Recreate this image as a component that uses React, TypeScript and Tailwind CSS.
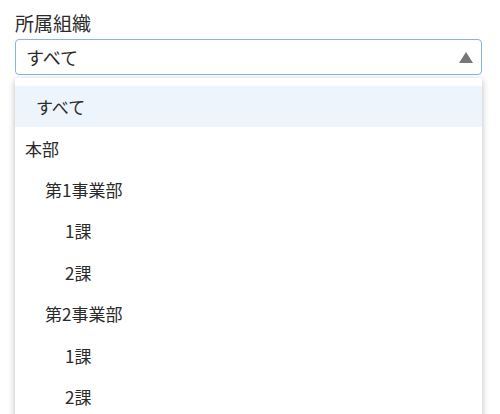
import React from "react";

const items: { label: string; pad: string; active?: boolean }[] = [
  { label: "すべて", pad: "pl-[21px]", active: true },
  { label: "本部", pad: "pl-[10px]" },
  { label: "第1事業部", pad: "pl-[30px]" },
  { label: "1課", pad: "pl-[50px]" },
  { label: "2課", pad: "pl-[50px]" },
  { label: "第2事業部", pad: "pl-[30px]" },
  { label: "1課", pad: "pl-[50px]" },
  { label: "2課", pad: "pl-[50px]" },
];

export default function App() {
  return (
    <div
      className="w-[500px] h-[414px] overflow-hidden bg-white pl-[15px] pr-[18px] pt-[10px] text-[#2b2b2b]"
      style={{ fontFamily: '"Noto Sans CJK JP", "Noto Sans", sans-serif' }}
    >
      <div className="text-[19px] leading-[26px] mb-[3px]">所属組織</div>
      <div className="h-[36px] rounded-[4px] border-[1.5px] border-[#86b4ea] flex items-center justify-between pl-[10px] pr-[8px]">
        <span className="text-[18px] leading-none">すべて</span>
        <svg width="14" height="11" viewBox="0 0 14 11">
          <polygon points="7,0 14,11 0,11" fill="#777777" />
        </svg>
      </div>
      <div className="mt-[3px] pt-[8px] pb-[20px] bg-white shadow-[0_2px_7px_rgba(0,0,0,0.28)] rounded-[2px]">
        {items.map((it, i) => (
          <div
            key={i}
            className={`h-[41.4px] flex items-center text-[17px] leading-none ${it.pad} ${
              it.active ? "bg-[#edf4fc]" : ""
            }`}
          >
            {it.label}
          </div>
        ))}
      </div>
    </div>
  );
}
